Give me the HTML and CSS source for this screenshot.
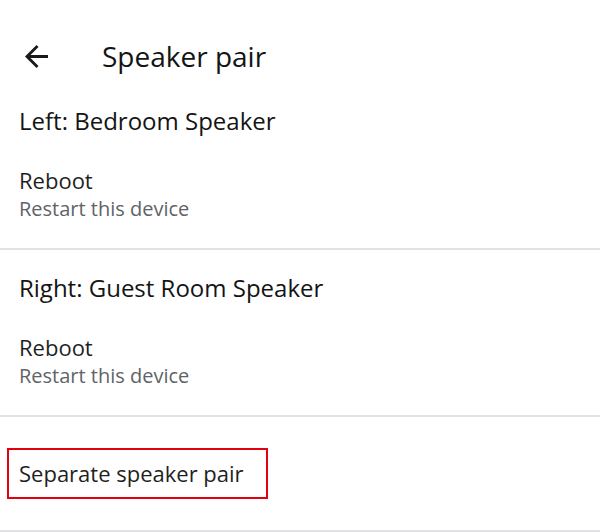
FILE: index.html
```html
<!DOCTYPE html>
<html lang="en">
<head>
    <meta charset="UTF-8">
    <meta name="viewport" content="width=device-width, initial-scale=1.0">
    <title>Speaker pair</title>
    <link rel="stylesheet" href="styles.css">
</head>
<body>
    <header class="app-bar">
        <button class="back-button" aria-label="Back">
            <svg viewBox="4 4 16 16" width="23" height="23">
                <path d="M20 11H7.83l5.59-5.59L12 4l-8 8 8 8 1.41-1.41L7.83 13H20v-2z" fill="#1a1a1a"/>
            </svg>
        </button>
        <h1 class="title">Speaker pair</h1>
    </header>

    <section class="group first">
        <h2 class="group-title">Left: Bedroom Speaker</h2>
        <div class="item">
            <div class="item-title">Reboot</div>
            <div class="item-sub">Restart this device</div>
        </div>
    </section>

    <section class="group">
        <h2 class="group-title">Right: Guest Room Speaker</h2>
        <div class="item">
            <div class="item-title">Reboot</div>
            <div class="item-sub">Restart this device</div>
        </div>
    </section>

    <section class="group last">
        <div class="highlight">
            <div class="item-title">Separate speaker pair</div>
        </div>
    </section>
</body>
</html>
```

FILE: styles.css
```css
body {
    margin: 0;
    background-color: white;
    color: #1f1f1f;
    font-family: "Open Sans", Roboto, sans-serif;
}

.app-bar {
    display: flex;
    align-items: center;
    padding: 40px 0 0 25px;
}

.back-button {
    display: flex;
    padding: 0;
    border: none;
    background: none;
    cursor: pointer;
}

.title {
    margin: 0 0 0 54px;
    font-size: 28px;
    font-weight: 500;
    line-height: 32px;
    color: #141414;
}

.group {
    padding: 24px 19px 27px;
    border-bottom: 2px solid #e2e2e5;
}

.group.first {
    padding-top: 35px;
}

.group.last {
    padding: 31px 0 31px 7px;
}

.group-title {
    margin: 0;
    font-size: 24px;
    font-weight: 500;
    line-height: 28px;
    color: #141414;
}

.item {
    margin-top: 32px;
}

.item-title {
    font-size: 22px;
    line-height: 26px;
}

.item-sub {
    margin-top: 4px;
    font-size: 20px;
    line-height: 24px;
    color: #5f6368;
}

.highlight {
    box-sizing: border-box;
    width: 261px;
    padding: 10px 10px 11px;
    border: 2px solid #e3000f;
}
```
